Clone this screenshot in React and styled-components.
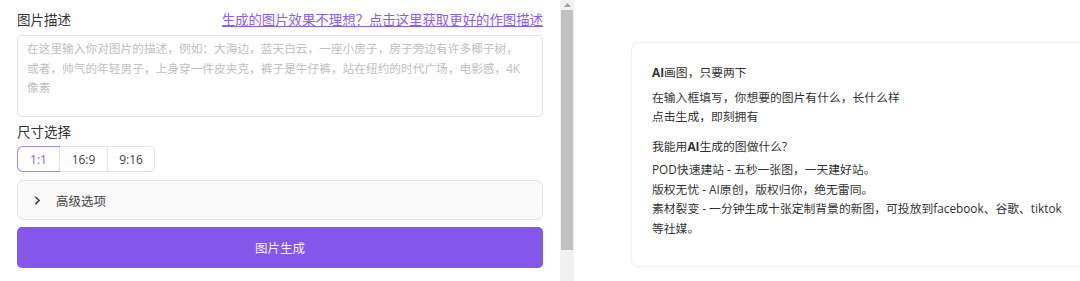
import React, { useState } from 'react';
import styled, { createGlobalStyle } from 'styled-components';

const GlobalStyle = createGlobalStyle`
  html, body {
    margin: 0;
    padding: 0;
    background: #fff;
    overflow: hidden;
  }
  body {
    font-family: "Open Sans", "Noto Sans CJK SC", sans-serif;
    color: #333;
  }
`;

const Page = styled.div`
  display: flex;
  width: 1080px;
  height: 281px;
  overflow: hidden;
`;

const LeftPanel = styled.div`
  width: 526px;
  flex-shrink: 0;
  padding: 10px 17px 0 17px;
  display: flex;
  flex-direction: column;
`;

const TitleRow = styled.div`
  display: flex;
  justify-content: space-between;
  align-items: center;
  height: 20px;
`;

const Label = styled.div`
  font-size: 13.5px;
  line-height: 20px;
  color: #333;
`;

const HelpLink = styled.a`
  font-size: 13.4px;
  line-height: 20px;
  color: #8b5cf6;
  text-decoration: underline;
  cursor: pointer;
`;

const TextArea = styled.textarea`
  margin-top: 5px;
  height: 82px;
  box-sizing: border-box;
  border: 1px solid #e3e3e3;
  border-radius: 5px;
  padding: 3px 17px 3px 9px;
  font-family: inherit;
  font-size: 11.7px;
  line-height: 19.5px;
  color: #333;
  resize: none;
  outline: none;
  overflow: hidden;
  &::placeholder {
    color: #c0c0c0;
  }
`;

const SizeLabel = styled(Label)`
  margin-top: 5px;
`;

const Segments = styled.div`
  margin-top: 4px;
  display: flex;
  align-self: flex-start;
  border: 1px solid #e3e3e3;
  border-radius: 5px;
  height: 26px;
  box-sizing: border-box;
`;

const Segment = styled.button`
  font-family: inherit;
  font-size: 12px;
  background: #fff;
  border: none;
  border-left: 1px solid #e3e3e3;
  color: ${p => (p.$active ? '#8b5cf6' : '#444')};
  padding: 0;
  width: ${p => p.$w}px;
  cursor: pointer;
  &:first-child {
    border-left: none;
    border-radius: 5px 0 0 5px;
    box-shadow: ${p => (p.$active ? '0 0 0 1px #a78bfa' : 'none')};
  }
  &:last-child {
    border-radius: 0 5px 5px 0;
  }
`;

const Accordion = styled.div`
  margin-top: 8px;
  height: 40px;
  box-sizing: border-box;
  border: 1px solid #e6e6e6;
  border-radius: 6px;
  background: #f9f9f9;
  display: flex;
  align-items: center;
  padding-left: 14px;
  gap: 13px;
  font-size: 12.5px;
  color: #444;
`;

const Chevron = styled.svg`
  width: 11px;
  height: 11px;
`;

const GenerateButton = styled.button`
  margin-top: 7px;
  height: 41px;
  border: none;
  border-radius: 5px;
  background: #8257e9;
  color: #f3eefe;
  font-family: inherit;
  font-size: 12.5px;
  cursor: pointer;
`;

const ScrollTrack = styled.div`
  width: 14px;
  flex-shrink: 0;
  background: #f1f1f1;
  display: flex;
  flex-direction: column;
  align-items: center;
`;

const ScrollArrow = styled.div`
  height: 10px;
  display: flex;
  align-items: center;
  justify-content: center;
  svg {
    width: 7px;
    height: 4px;
  }
`;

const ScrollThumb = styled.div`
  width: 12px;
  height: 240px;
  background: #c1c1c1;
`;

const RightArea = styled.div`
  flex: 1;
  padding: 42px 0 0 57px;
  min-width: 0;
`;

const Card = styled.div`
  width: 520px;
  height: 225px;
  box-sizing: border-box;
  border: 1px solid #f2f2f2;
  border-right: none;
  border-radius: 8px 0 0 8px;
  box-shadow: 0 1px 4px rgba(0, 0, 0, 0.04);
  padding: 20px 0 0 20px;
  font-size: 11.8px;
  line-height: 19.5px;
  color: #333;
`;

const Para = styled.p`
  margin: 0 0 ${p => p.$gap || 0}px 0;
  width: 420px;
`;

export default function App() {
  const [size, setSize] = useState('1:1');
  const sizes = [
    { v: '1:1', w: 41 },
    { v: '16:9', w: 48 },
    { v: '9:16', w: 47 },
  ];

  return (
    <>
      <GlobalStyle />
      <Page>
        <LeftPanel>
          <TitleRow>
            <Label>图片描述</Label>
            <HelpLink>生成的图片效果不理想？点击这里获取更好的作图描述</HelpLink>
          </TitleRow>
          <TextArea placeholder="在这里输入你对图片的描述，例如：大海边，蓝天白云，一座小房子，房子旁边有许多椰子树，或者，帅气的年轻男子，上身穿一件皮夹克，裤子是牛仔裤，站在纽约的时代广场，电影感，4K像素" />
          <SizeLabel>尺寸选择</SizeLabel>
          <Segments>
            {sizes.map(s => (
              <Segment key={s.v} $w={s.w} $active={size === s.v} onClick={() => setSize(s.v)}>
                {s.v}
              </Segment>
            ))}
          </Segments>
          <Accordion>
            <Chevron viewBox="0 0 10 10" fill="none" stroke="#333" strokeWidth="1.3">
              <path d="M3 1.5 L6.5 5 L3 8.5" />
            </Chevron>
            高级选项
          </Accordion>
          <GenerateButton>图片生成</GenerateButton>
        </LeftPanel>

        <ScrollTrack>
          <ScrollArrow>
            <svg viewBox="0 0 7 4">
              <path d="M0 4 L3.5 0 L7 4 Z" fill="#a3a3a3" />
            </svg>
          </ScrollArrow>
          <ScrollThumb />
        </ScrollTrack>

        <RightArea>
          <Card>
            <Para $gap={5}><b>AI</b>画图，只要两下</Para>
            <Para>在输入框填写，你想要的图片有什么，长什么样</Para>
            <Para $gap={10}>点击生成，即刻拥有</Para>
            <Para $gap={4}>我能用<b>AI</b>生成的图做什么?</Para>
            <Para>POD快速建站 - 五秒一张图，一天建好站。</Para>
            <Para>版权无忧 - AI原创，版权归你，绝无雷同。</Para>
            <Para>素材裂变 - 一分钟生成十张定制背景的新图，可投放到facebook、谷歌、tiktok等社媒。</Para>
          </Card>
        </RightArea>
      </Page>
    </>
  );
}
